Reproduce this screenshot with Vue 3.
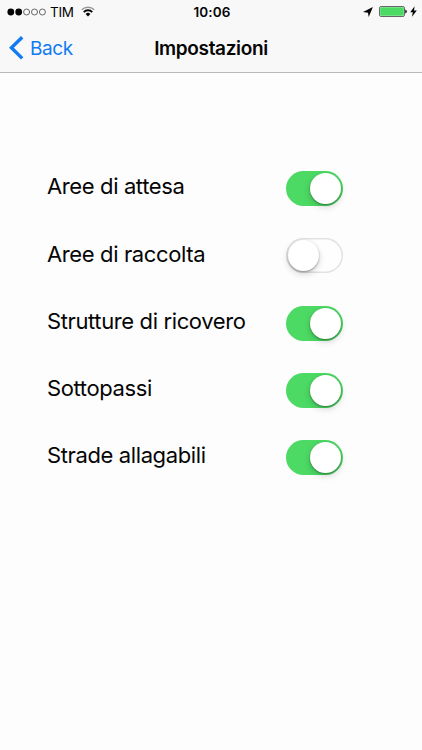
<template>
  <div class="screen">
    <header class="header">
      <!-- status bar -->
      <div class="status-bar">
        <div class="status-left">
          <svg class="signal" width="40" height="8" viewBox="0 0 40 8">
            <circle
              v-for="n in 5"
              :key="n"
              :cx="3.8 + (n - 1) * 7.9"
              cy="4"
              :r="n <= signal ? 3.4 : 3"
              :fill="n <= signal ? '#050505' : 'none'"
              :stroke="n <= signal ? 'none' : '#444'"
              stroke-width="0.8"
            />
          </svg>
          <span class="carrier">TIM</span>
          <svg class="wifi" width="14" height="11" viewBox="0 0 14 11">
            <path d="M0.8 3.7 A8.8 8.8 0 0 1 13.2 3.7" fill="none" stroke="#999" stroke-width="1.5" />
            <path d="M2.8 6.1 A5.9 5.9 0 0 1 11.2 6.1" fill="none" stroke="#050505" stroke-width="2" />
            <path d="M4.6 8.1 A3.3 3.3 0 0 1 9.4 8.1 L7 10.6 Z" fill="#050505" />
          </svg>
        </div>
        <span class="clock">10:06</span>
        <div class="status-right">
          <svg width="10" height="10" viewBox="0 0 10 10">
            <path d="M9.9 0.1 L5.7 10 L5 5.7 L0 5 Z" fill="#050505" />
          </svg>
          <svg class="battery" width="28" height="11" viewBox="0 0 28 11">
            <rect x="0.5" y="0.5" width="25" height="10" rx="1.6" fill="#fff" stroke="#555" stroke-width="0.9" />
            <rect x="1.2" y="1.2" width="23.6" height="8.6" rx="0.7" fill="#4cd964" />
            <path d="M26.2 3.4 Q27.9 3.8 27.9 5.5 Q27.9 7.2 26.2 7.6 Z" fill="#222" />
          </svg>
          <svg class="bolt" width="7" height="11" viewBox="0 0 7 11">
            <path d="M4.6 0.3 L0.2 6.2 L2.8 6.2 L2 10.8 L6.8 4.5 L4 4.5 Z" fill="#050505" />
          </svg>
        </div>
      </div>

      <!-- navigation bar -->
      <nav class="nav-bar">
        <button class="back-button">
          <svg width="15" height="24" viewBox="0 0 15 24">
            <path d="M13.2 1.2 L2.4 11.8 L13.2 22.4" fill="none" stroke="#117bf3" stroke-width="3.4" />
          </svg>
          <span class="back-text">Back</span>
        </button>
        <h1 class="title">Impostazioni</h1>
      </nav>
    </header>

    <main class="settings">
      <div v-for="item in settings" :key="item.label" class="row" @click="item.on = !item.on">
        <span class="label">{{ item.label }}</span>
        <span class="switch" :class="{ on: item.on }">
          <span class="knob"></span>
        </span>
      </div>
    </main>
  </div>
</template>

<script setup>
import { ref } from 'vue'

const signal = 2

const settings = ref([
  { label: 'Aree di attesa', on: true },
  { label: 'Aree di raccolta', on: false },
  { label: 'Strutture di ricovero', on: true },
  { label: 'Sottopassi', on: true },
  { label: 'Strade allagabili', on: true }
])
</script>

<style>
body {
  background-color: #fdfdfd;
}
</style>

<style scoped>
.screen {
  min-height: 750px;
  background-color: #fdfdfd;
  color: #050505;
  font-family: Inter, "Liberation Sans", sans-serif;
}

.header {
  box-sizing: border-box;
  height: 73px;
  background-color: #f8f8f8;
  border-bottom: 1px solid #b9b9b9;
}

.status-bar {
  display: grid;
  grid-template-columns: 1fr auto 1fr;
  align-items: center;
  height: 23px;
  padding: 0 5px 0 7px;
}

.status-left,
.status-right {
  display: flex;
  align-items: center;
}

.status-right {
  justify-content: flex-end;
}

.carrier {
  margin-left: 3px;
  font-size: 13.5px;
  letter-spacing: -0.3px;
}

.wifi {
  margin-left: 7px;
}

.clock {
  font-size: 13.5px;
  font-weight: 600;
  letter-spacing: 0.1px;
}

.battery {
  margin-left: 6px;
}

.bolt {
  margin-left: 3px;
}

.nav-bar {
  display: grid;
  grid-template-columns: 1fr auto 1fr;
  align-items: center;
  height: 49px;
}

.back-button {
  display: flex;
  align-items: center;
  gap: 6px;
  padding: 0 0 0 9px;
  border: none;
  background: none;
  color: #117bf3;
  font-family: inherit;
  font-size: 19px;
  letter-spacing: -0.4px;
  cursor: pointer;
}

.back-text,
.title {
  padding-top: 1px;
}

.title {
  margin: 0;
  font-size: 19px;
  font-weight: 600;
  letter-spacing: -0.35px;
}

.settings {
  display: flex;
  flex-direction: column;
  gap: 32.3px;
  padding: 98px 79px 0 47px;
}

.row {
  display: flex;
  justify-content: space-between;
  align-items: center;
  height: 35px;
  cursor: pointer;
}

.label {
  padding-bottom: 4.4px;
  font-size: 22px;
  letter-spacing: -0.38px;
}

.switch {
  box-sizing: border-box;
  display: flex;
  width: 57px;
  height: 35px;
  padding: 2px;
  border-radius: 18px;
  background-color: #fefefe;
  box-shadow: inset 0 0 0 1.5px #e2e2e2;
}

.switch.on {
  justify-content: flex-end;
  background-color: #4cd964;
  box-shadow: none;
}

.knob {
  width: 31px;
  height: 31px;
  border-radius: 50%;
  background-color: #fff;
  box-shadow: 0 3px 7px rgba(0, 0, 0, 0.16), 0 1px 2px rgba(0, 0, 0, 0.35);
}
</style>
